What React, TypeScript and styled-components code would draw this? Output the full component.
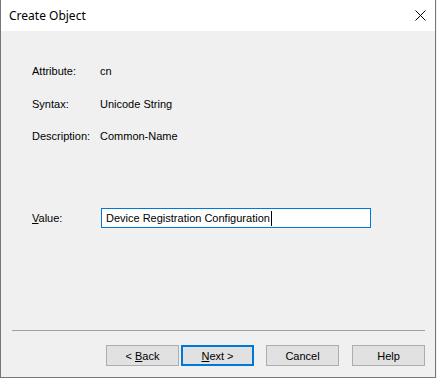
import React from "react";
import styled, { createGlobalStyle } from "styled-components";

const GlobalStyle = createGlobalStyle`
  html, body {
    margin: 0;
    padding: 0;
    background: #f0f0f0;
  }
  body {
    width: 437px;
    height: 378px;
    overflow: hidden;
  }
`;

const Window = styled.div`
  box-sizing: border-box;
  width: 436px;
  height: 378px;
  display: flex;
  flex-direction: column;
  background: #f0f0f0;
  border: 1px solid #777777;
  border-top: none;
  font-family: "Liberation Sans", Arial, sans-serif;
  font-size: 11px;
  color: #000;
`;

const TitleBar = styled.div`
  height: 31px;
  flex: none;
  display: flex;
  align-items: center;
  justify-content: space-between;
  background: #ffffff;
  padding: 0 9px 0 8px;
`;

const Title = styled.span`
  font-family: "Noto Sans", "Open Sans", sans-serif;
  font-size: 12px;
  color: #000;
  line-height: 1;
`;

const CloseButton = styled.div`
  width: 12px;
  height: 12px;
  display: flex;
  align-items: center;
  justify-content: center;
`;

const Content = styled.div`
  flex: 1;
  display: flex;
  flex-direction: column;
  padding: 33px 10px 11px 31px;
`;

const InfoGrid = styled.div`
  display: grid;
  grid-template-columns: 68px 1fr;
  grid-auto-rows: 14px;
  row-gap: 18.5px;
  line-height: 14px;
`;

const ValueRow = styled.div`
  margin-top: 65px;
  display: flex;
  align-items: center;
  height: 20px;
`;

const ValueLabel = styled.span`
  width: 69px;
`;

const TextBox = styled.div`
  box-sizing: border-box;
  width: 270px;
  height: 20px;
  border: 1px solid #0078d7;
  background: #ffffff;
  display: flex;
  align-items: center;
  padding-left: 4px;
  font-size: 11px;
`;

const Caret = styled.span`
  display: inline-block;
  width: 1px;
  height: 15px;
  background: #000;
  margin-left: 1px;
`;

const Spacer = styled.div`
  flex: 1;
`;

const Separator = styled.div`
  height: 1px;
  background: #a0a0a0;
  margin: 0 0 14px -20px;
`;

const ButtonRow = styled.div`
  display: flex;
  justify-content: flex-end;
`;

const Button = styled.div<{ $focused?: boolean; $gap?: number }>`
  box-sizing: border-box;
  width: 73px;
  height: 21px;
  margin-left: ${(p) => p.$gap ?? 0}px;
  display: flex;
  align-items: center;
  justify-content: center;
  background: #e1e1e1;
  border: ${(p) => (p.$focused ? "2px solid #0078d7" : "1px solid #adadad")};
  font-size: 11px;
`;

const Key = styled.span`
  text-decoration: underline;
  text-underline-offset: 1px;
`;

const App: React.FC = () => (
  <>
    <GlobalStyle />
    <Window>
      <TitleBar>
        <Title>Create Object</Title>
        <CloseButton>
          <svg width="11" height="11" viewBox="0 0 11 11">
            <path d="M0.5 0.5 L10.5 10.5 M10.5 0.5 L0.5 10.5" stroke="#000" strokeWidth="1" />
          </svg>
        </CloseButton>
      </TitleBar>
      <Content>
        <InfoGrid>
          <span>Attribute:</span>
          <span>cn</span>
          <span>Syntax:</span>
          <span>Unicode String</span>
          <span>Description:</span>
          <span>Common-Name</span>
        </InfoGrid>
        <ValueRow>
          <ValueLabel>
            <Key>V</Key>alue:
          </ValueLabel>
          <TextBox>
            Device Registration Configuration
            <Caret />
          </TextBox>
        </ValueRow>
        <Spacer />
        <Separator />
        <ButtonRow>
          <Button>
            &lt;&nbsp;<Key>B</Key>ack
          </Button>
          <Button $focused $gap={2}>
            <Key>N</Key>ext &gt;
          </Button>
          <Button $gap={12}>Cancel</Button>
          <Button $gap={13}>Help</Button>
        </ButtonRow>
      </Content>
    </Window>
  </>
);

export default App;
